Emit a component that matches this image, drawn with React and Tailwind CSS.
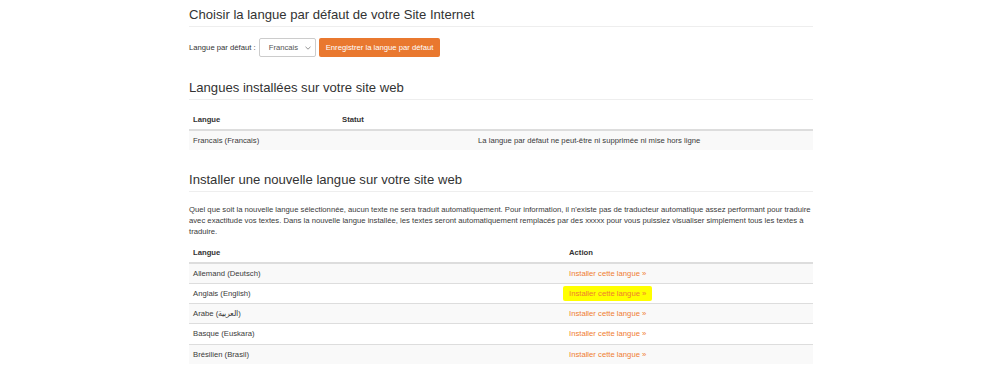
import * as React from "react";

const installed = [{ name: "Francais (Francais)", note: "La langue par défaut ne peut-être ni supprimée ni mise hors ligne" }];

const available = [
  "Allemand (Deutsch)",
  "Anglais (English)",
  "Arabe (العربية)",
  "Basque (Euskara)",
  "Brésilien (Brasil)",
];

const PageHeader = ({ children, className = "" }) => (
  <div className={`border-b border-[#eee] pb-[4px] ${className}`}>
    <h3 className="text-[13.1px] leading-[15px] font-normal text-[#333]">{children}</h3>
  </div>
);

export default function App() {
  return (
    <div className="w-[1000px] h-[365px] overflow-hidden bg-white font-['Liberation_Sans',Arial,sans-serif] text-[7.7px] text-[#333]">
      <div className="ml-[189px] w-[624px] pt-[7px]">
        {/* Default language */}
        <PageHeader>Choisir la langue par défaut de votre Site Internet</PageHeader>
        <div className="mt-[11px] flex items-center">
          <span className="mr-[3px]">Langue par défaut :</span>
          <div className="flex h-[19px] w-[57px] items-center justify-between rounded-[2px] border border-[#ccc] bg-white pl-[9px] pr-[4px] text-[#555]">
            <span>Francais</span>
            <svg width="6" height="4" viewBox="0 0 6 4" fill="none">
              <path d="M0.5 0.8 L3 3.2 L5.5 0.8" stroke="#777" strokeWidth="0.8" />
            </svg>
          </div>
          <button className="ml-[3px] h-[19px] rounded-[2px] bg-[#e9782f] px-[7px] text-white">
            Enregistrer la langue par défaut
          </button>
        </div>

        {/* Installed languages */}
        <PageHeader className="mt-[23px]">Langues installées sur votre site web</PageHeader>
        <table className="mt-[10px] w-full border-collapse">
          <thead>
            <tr className="border-b-2 border-[#ddd]">
              <th className="h-[20px] w-[149px] px-[4px] text-left font-bold">Langue</th>
              <th className="w-[136px] px-[4px] text-left font-bold">Statut</th>
              <th className="px-[4px]"></th>
            </tr>
          </thead>
          <tbody>
            {installed.map((row) => (
              <tr key={row.name} className="bg-[#f9f9f9]">
                <td className="h-[20px] px-[4px] text-[#3a3a3a]">{row.name}</td>
                <td className="px-[4px]"></td>
                <td className="px-[4px] text-[#3a3a3a]">{row.note}</td>
              </tr>
            ))}
          </tbody>
        </table>

        {/* New language */}
        <PageHeader className="mt-[22px]">Installer une nouvelle langue sur votre site web</PageHeader>
        <p className="mt-[12px] leading-[11px] text-[#3a3a3a]">
          Quel que soit la nouvelle langue sélectionnée, aucun texte ne sera traduit automatiquement. Pour information, il
          n'existe pas de traducteur automatique assez performant pour traduire avec exactitude vos textes. Dans la
          nouvelle langue installée, les textes seront automatiquement remplacés par des xxxxx pour vous puissiez
          visualiser simplement tous les textes à traduire.
        </p>
        <table className="mt-[6px] w-full border-collapse">
          <thead>
            <tr className="border-b-2 border-[#ddd]">
              <th className="h-[20px] w-[376px] px-[4px] text-left font-bold">Langue</th>
              <th className="px-[4px] text-left font-bold">Action</th>
            </tr>
          </thead>
          <tbody>
            {available.map((name, i) => (
              <tr key={name} className={`border-t border-[#ddd] ${i % 2 === 0 ? "bg-[#f9f9f9]" : "bg-white"}`}>
                <td className="h-[20.3px] px-[4px] text-[#3a3a3a]">{name}</td>
                <td className="px-[4px]">
                  {i === 1 ? (
                    <span className="-ml-[6px] inline-block rounded-[2px] bg-[#ffff00] px-[6px] py-[3px] leading-[9px] text-[#ef7d32]">
                      Installer cette langue »
                    </span>
                  ) : (
                    <a className="text-[#ef7d32]">Installer cette langue »</a>
                  )}
                </td>
              </tr>
            ))}
          </tbody>
        </table>
      </div>
    </div>
  );
}
